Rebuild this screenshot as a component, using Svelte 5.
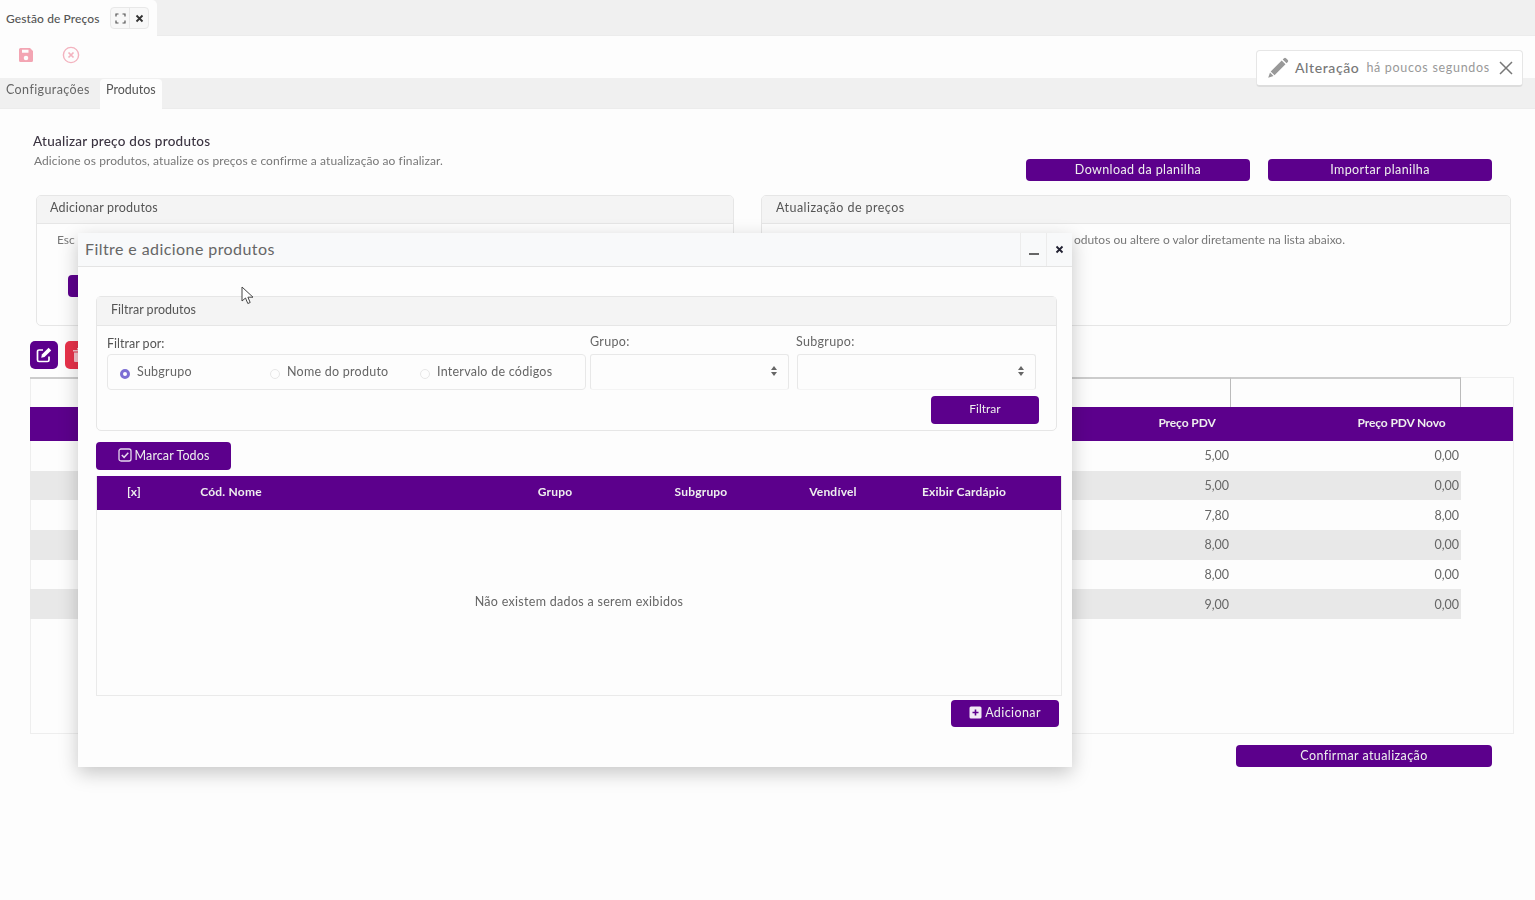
<script>
    const rows = [
        { pdv: '5,00', novo: '0,00' },
        { pdv: '5,00', novo: '0,00' },
        { pdv: '7,80', novo: '8,00' },
        { pdv: '8,00', novo: '0,00' },
        { pdv: '8,00', novo: '0,00' },
        { pdv: '9,00', novo: '0,00' }
    ];
    const radios = [
        { label: 'Subgrupo', checked: true },
        { label: 'Nome do produto', checked: false },
        { label: 'Intervalo de códigos', checked: false }
    ];
    const columns = ['Grupo', 'Subgrupo', 'Vendível', 'Exibir Cardápio'];
</script>

<div class="page">
    <div class="topbar">
        <div class="doc-tab">
            <span class="doc-title">Gestão de Preços</span>
            <div class="doc-actions">
                <span class="doc-btn">
                    <svg width="11" height="11" viewBox="0 0 11 11" fill="none" stroke="#555" stroke-width="1.2">
                        <path d="M1 3.5V1h2.5M7.5 1H10v2.5M10 7.5V10H7.5M3.5 10H1V7.5" />
                    </svg>
                </span>
                <span class="doc-btn">
                    <svg width="9" height="9" viewBox="0 0 9 9" stroke="#333" stroke-width="1.8">
                        <path d="M1.5 1.5l6 6M7.5 1.5l-6 6" />
                    </svg>
                </span>
            </div>
        </div>
    </div>

    <div class="toolbar">
        <svg width="16" height="16" viewBox="0 0 16 16">
            <path fill="#f3a5b3" fill-rule="evenodd" d="M2.5 1H12l3 3v9.5a1.5 1.5 0 0 1-1.5 1.5h-11A1.5 1.5 0 0 1 1 13.500v-11A1.500 1.500 0 0 1 2.500 1zM4 2.800v3h6.500v-3zM8 8.700a2.300 2.300 0 1 0 0 4.600 2.300 2.300 0 0 0 0-4.600z" />
        </svg>
        <svg width="18" height="18" viewBox="0 0 18 18" fill="none" stroke="#f3b3bf" stroke-width="1.400">
            <circle cx="9" cy="9" r="7.600" />
            <path d="M6.500 6.500l5 5M11.500 6.500l-5 5" stroke-width="1.700" />
        </svg>
    </div>

    <div class="tabs">
        <span class="tab">Configurações</span>
        <span class="tab active">Produtos</span>
    </div>

    <div class="content">
        <div class="intro">
            <div>
                <h2>Atualizar preço dos produtos</h2>
                <p>Adicione os produtos, atualize os preços e confirme a atualização ao finalizar.</p>
            </div>
            <div class="intro-actions">
                <button class="btn wide">Download da planilha</button>
                <button class="btn wide">Importar planilha</button>
            </div>
        </div>

        <div class="panels">
            <section class="panel left">
                <header>Adicionar produtos</header>
                <div class="panel-body">
                    <p>Esc</p>
                    <span class="stub"></span>
                </div>
            </section>
            <section class="panel right">
                <header>Atualização de preços</header>
                <div class="panel-body">
                    <p class="clipped-end">odutos ou altere o valor diretamente na lista abaixo.</p>
                </div>
            </section>
        </div>

        <div class="row-actions">
            <span class="square purple">
                <svg width="16" height="16" viewBox="0 0 16 16" fill="none" stroke="#fff" stroke-width="1.700">
                    <path d="M13 9.500V13a1.500 1.500 0 0 1-1.500 1.500H3A1.500 1.500 0 0 1 1.500 13V4.500A1.500 1.500 0 0 1 3 3h4" />
                    <path fill="#fff" stroke="none" d="M12.600.8l2.600 2.600-6.700 6.700-3.300.7.700-3.300z" />
                </svg>
            </span>
            <span class="square red">
                <svg width="12" height="14" viewBox="0 0 12 14" fill="#f6c3cb">
                    <path d="M0 2h12v1.500H0zM4 0h4v1.500H4zM1 4.500h10V13a1 1 0 0 1-1 1H2a1 1 0 0 1-1-1z" />
                </svg>
            </span>
        </div>

        <div class="grid-frame">
            <div class="filter-row">
                <span class="filter-fill"></span>
                <span class="filter-cell"></span>
                <span class="filter-gap"></span>
            </div>
            <div class="grid-head">
                <span></span>
                <span>Preço PDV</span>
                <span>Preço PDV Novo</span>
            </div>
            {#each rows as r, i}
                <div class="grid-row" class:odd={i % 2 === 1}>
                    <span></span>
                    <span>{r.pdv}</span>
                    <span>{r.novo}</span>
                </div>
            {/each}
        </div>

        <div class="confirm">
            <button class="btn confirm-btn">Confirmar atualização</button>
        </div>
    </div>

    <div class="toast">
        <svg width="22" height="22" viewBox="0 0 22 22" fill="#999">
            <path d="M17 1.200a1.500 1.500 0 0 1 2 0l1.800 1.800a1.500 1.500 0 0 1 0 2l-1.300 1.300-3.800-3.800zM14.700 3.500l3.800 3.800L7.500 18.300l-3.800-3.800zM3 15.500l3.500 3.500-5.300 1.800z" />
        </svg>
        <strong>Alteração</strong>
        <span>há poucos segundos</span>
        <svg class="toast-x" width="14" height="14" viewBox="0 0 14 14" stroke="#777" stroke-width="1.500">
            <path d="M1 1l12 12M13 1L1 13" />
        </svg>
    </div>

    <div class="modal">
        <div class="modal-title">
            <span class="modal-name">Filtre e adicione produtos</span>
            <span class="modal-btn"><i class="minus"></i></span>
            <span class="modal-btn">
                <svg class="modal-x" width="9" height="9" viewBox="0 0 9 9" stroke="#223" stroke-width="1.800">
                    <path d="M1.500 1.500l6 6M7.500 1.500l-6 6" />
                </svg>
            </span>
        </div>
        <div class="modal-body">
            <section class="filter-panel">
                <header>Filtrar produtos</header>
                <div class="filter-body">
                    <div class="filter-fields">
                        <div class="field by">
                            <span class="by-label">Filtrar por:</span>
                            <div class="radio-box">
                                {#each radios as r}
                                    <span class="radio">
                                        <i class:on={r.checked}></i>{r.label}
                                    </span>
                                {/each}
                            </div>
                        </div>
                        <div class="field grupo">
                            <span class="lbl">Grupo:</span>
                            <div class="select"><span class="arrows"></span></div>
                        </div>
                        <div class="field subgrupo">
                            <span class="lbl">Subgrupo:</span>
                            <div class="select"><span class="arrows"></span></div>
                        </div>
                    </div>
                    <div class="filter-actions">
                        <button class="btn filtrar">Filtrar</button>
                    </div>
                </div>
            </section>

            <button class="btn mark">
                <svg width="14" height="14" viewBox="0 0 14 14" fill="none" stroke="#e6d8ee" stroke-width="1.300">
                    <rect x="1" y="1" width="12" height="12" rx="2" />
                    <path d="M3.800 7l2.300 2.300 4.200-4.500" stroke-width="1.500" />
                </svg>
                Marcar Todos
            </button>

            <div class="result">
                <div class="result-head">
                    <span class="c-x">[x]</span>
                    <span class="c-nome">Cód. Nome</span>
                    {#each columns as c}
                        <span class="c-col">{c}</span>
                    {/each}
                </div>
                <div class="result-empty">Não existem dados a serem exibidos</div>
            </div>

            <div class="add-row">
                <button class="btn add">
                    <svg width="13" height="13" viewBox="0 0 13 13">
                        <path fill="#f1eaf5" fill-rule="evenodd" d="M2 .5h9A1.500 1.500 0 0 1 12.500 2v9a1.500 1.500 0 0 1-1.500 1.500H2A1.500 1.500 0 0 1 .5 11V2A1.500 1.500 0 0 1 2 .5zM5.700 3.500v2.200H3.500v1.600h2.200v2.200h1.600V7.300h2.200V5.700H7.300V3.500z" />
                    </svg>
                    Adicionar
                </button>
            </div>
        </div>
    </div>

    <svg class="cursor" width="14" height="20" viewBox="0 0 14 20">
        <path fill="#fff" stroke="#444" stroke-width="1" d="M1 1v14l3.500-3 2.300 5.500 2.400-1-2.300-5.300H12z" />
    </svg>
</div>

<style>
    :global(body) {
        margin: 0;
        background: #fdfdfd;
        font-family: "Lato", "Open Sans", sans-serif;
        color: #555;
    }
    .page { position: relative; width: 1535px; height: 900px; overflow: hidden; font-size: 12px; filter: blur(.35px); }

    .topbar { height: 36px; background: #f0f0f0; border-bottom: 1px solid #ececec; box-sizing: border-box; }
    .doc-tab {
        width: 157px; height: 36px; background: #fdfdfd; border-radius: 0 5px 0 0;
        display: flex; align-items: center; justify-content: space-between;
        padding: 0 8px 0 6px; box-sizing: border-box;
    }
    .doc-title { font-size: 12px; color: #555; font-weight: 500; letter-spacing: .1px; }
    .doc-actions { display: flex; border: 1px solid #e8e8e8; border-radius: 4px; background: #f8f8f8; }
    .doc-btn { width: 18px; height: 20px; display: flex; align-items: center; justify-content: center; }
    .doc-btn + .doc-btn { border-left: 1px solid #e8e8e8; }

    .toolbar { height: 42px; display: flex; align-items: center; gap: 28px; padding: 0 0 4px 18px; box-sizing: border-box; }

    .tabs { height: 31px; background: #f0f0f0; display: flex; align-items: flex-end; border-bottom: 1px solid #ececec; box-sizing: border-box; }
    .tab { height: 29px; padding: 3px 6px 0; box-sizing: border-box; font-size: 12.500px; color: #666; width: 100px; white-space: nowrap; letter-spacing: .4px; }
    .tab.active { width: 62px; background: #fdfdfd; border-radius: 4px 4px 0 0; color: #555; margin-bottom: -1px; height: 30px; letter-spacing: 0; }

    .content { padding: 0 22px 0 30px; }
    .intro { display: flex; justify-content: space-between; align-items: flex-end; height: 72px; box-sizing: border-box; }
    .intro h2 { margin: 0 0 4px 3px; font-size: 13.500px; font-weight: 500; color: #3a3340; letter-spacing: .25px; }
    .intro p { margin: 0 0 13px 4px; font-size: 12px; color: #777; letter-spacing: .08px; }
    .intro-actions { display: flex; gap: 18px; margin-right: 21px; }

    .btn {
        background: #5c008c; color: #eee; border: 0; border-radius: 4px; font: inherit;
        display: inline-flex; align-items: center; justify-content: center; gap: 3px; padding: 0 0 2px;
    }
    .btn.wide { width: 224px; height: 22px; font-size: 12.500px; letter-spacing: .4px; }

    .panels { display: flex; gap: 27px; margin: 14px 0 0 6px; }
    .panel { border: 1px solid #e6e6e6; border-radius: 5px; height: 131px; box-sizing: border-box; overflow: hidden; }
    .panel.left { width: 698px; }
    .panel.right { width: 750px; }
    .panel header { height: 28px; background: #f4f4f4; border-bottom: 1px solid #e6e6e6; box-sizing: border-box; padding: 4px 14px; font-size: 12.500px; color: #555; }
    .panel.left header { letter-spacing: .2px; padding-left: 13px; }
    .panel.right header { letter-spacing: .45px; }
    .panel-body { padding: 8px 20px; font-size: 12px; color: #777; }
    .panel-body p { margin: 0; }
    .clipped-end { text-align: right; padding-right: 145px; }
    .stub { display: block; width: 40px; height: 22px; background: #5c008c; border-radius: 4px; margin: 28px 0 0 11px; }

    .row-actions { display: flex; gap: 7px; margin-top: 15px; }
    .square { width: 28px; height: 28px; border-radius: 5px; display: flex; align-items: center; justify-content: center; }
    .square.purple { background: #5c008c; }
    .square.red { background: #e8324a; }

    .grid-frame { margin-top: 8px; width: 1483px; height: 356px; border: 1px solid #eeeeee; border-width: 0 1px 1px 0; box-shadow: inset 1px 0 0 #eee; }
    .filter-row { height: 30px; display: flex; }
    .filter-fill { flex: 1; border-top: 2px solid #cccccc; }
    .filter-cell { width: 229px; border: 1px solid #bbb; border-width: 0 1px; border-top: 2px solid #cccccc; }
    .filter-gap { width: 52px; border-top: 1px solid #eee; }
    .grid-head { height: 34px; background: #5c008c; color: #eee; display: grid; grid-template-columns: 1fr 206px 223px; align-items: center; text-align: center; font-size: 12px; font-weight: 700; padding-bottom: 3px; box-sizing: border-box; letter-spacing: -.1px; }
    .grid-row { height: 29.700px; width: 1431px; display: grid; grid-template-columns: 1fr 230px 230px; align-items: center; text-align: right; font-size: 12.500px; color: #666; }
    .grid-row span { padding-right: 2px; }
    .grid-row.odd { background: #e8e8e8; }
    .confirm { display: flex; justify-content: flex-end; margin: 11px 21px 0 0; }
    .confirm-btn { width: 256px; height: 22px; font-size: 12.500px; letter-spacing: .4px; }

    .toast {
        position: absolute; left: 1256px; top: 50px; width: 267px; height: 37px; box-sizing: border-box;
        background: #fff; border: 1px solid #e6e6e6; border-bottom: 2px solid #ddd; border-radius: 4px;
        display: flex; align-items: center; padding: 0 9px 1px 10px; color: #888;
    }
    .toast strong { font-size: 14px; font-weight: 500; color: #777; margin-left: 6px; letter-spacing: .6px; }
    .toast span { font-size: 12.500px; margin-left: 7px; color: #999; letter-spacing: .7px; white-space: nowrap; }
    .toast-x { margin-left: auto; }

    .modal {
        position: absolute; left: 78px; top: 233px; width: 994px; height: 534px;
        background: #fdfdfd; box-shadow: 0 6px 18px rgba(0, 0, 0, .22);
    }
    .modal-title { height: 34px; background: #f8f9fa; border-bottom: 1px solid #e4e4e4; box-sizing: border-box; display: flex; align-items: stretch; }
    .modal-name { flex: 1; padding: 6px 7px; font-size: 16px; color: #666; letter-spacing: .42px; }
    .modal-btn { width: 25px; border-left: 1px solid #ececec; display: flex; align-items: center; justify-content: center; }
    .minus { display: block; width: 10px; height: 1.500px; background: #666; margin-top: 9px; }
    .modal-x { margin: 0 1px 0 0; }
    .modal-body { padding: 29px 10px 0 18px; }

    .filter-panel { width: 961px; height: 135px; border: 1px solid #e6e6e6; border-radius: 5px; box-sizing: border-box; }
    .filter-panel header { height: 29px; background: #f4f4f4; border-bottom: 1px solid #e6e6e6; box-sizing: border-box; padding: 5px 14px; font-size: 12.500px; color: #555; }
    .filter-body { padding: 8px 17px 0 10px; }
    .filter-fields { display: flex; height: 56px; }
    .field { display: flex; flex-direction: column; }
    .field.by { width: 479px; }
    .field.grupo { width: 199px; margin-left: 4px; }
    .field.subgrupo { width: 239px; margin-left: 8px; }
    .by-label { font-size: 12.500px; margin: 2px 0 3px; color: #555; height: 15px; }
    .lbl { font-size: 12.500px; margin: 1px 0 5px; color: #666; height: 14px; letter-spacing: .3px; line-height: 14px; }
    .field.subgrupo .lbl { margin-left: -1px; }
    .radio-box { height: 36px; border: 1px solid #e8e8e8; border-radius: 4px; box-sizing: border-box; display: grid; grid-template-columns: 150px 150px 1fr; align-items: center; padding: 0 0 0 12px; }
    .radio { display: flex; align-items: center; gap: 7px; font-size: 12.500px; color: #666; letter-spacing: .25px; margin-top: -1px; }
    .radio i { width: 10px; height: 10px; border-radius: 50%; border: 1px solid #e6e6e6; box-sizing: border-box; margin-top: 5px; }
    .radio i.on { background: #fff; border: 3px solid #7d6fd4; }
    .select { height: 36px; border: 1px solid #e8e8e8; border-bottom-color: #f4f4f4; border-radius: 3px; box-sizing: border-box; position: relative; }
    .arrows { position: absolute; right: 14px; top: 11px; width: 0; height: 10px; }
    .arrows::before, .arrows::after { content: ""; position: absolute; left: -3px; border-left: 3px solid transparent; border-right: 3px solid transparent; }
    .arrows::before { top: 0; border-bottom: 4px solid #666; }
    .arrows::after { top: 6px; border-top: 4px solid #666; }
    .filter-actions { display: flex; justify-content: flex-end; margin: 6px 0 0; }
    .filtrar { width: 108px; height: 28px; font-size: 12px; padding-bottom: 3px; }

    .mark { width: 135px; height: 28px; margin-top: 11px; font-size: 12.500px; display: flex; letter-spacing: .1px; }
    .result { width: 966px; height: 220px; margin: 6px 0 0 0; border: 1px solid #eaeaea; border-top: 0; box-sizing: border-box; }
    .result-head { height: 34px; background: #5c008c; color: #eee; font-size: 12px; font-weight: 700; position: relative; letter-spacing: .2px; }
    .result-head span { position: absolute; top: 8px; white-space: nowrap; transform: translateX(-50%); }
    .c-x { left: 37px; }
    .c-nome { left: 134px; }
    .c-col:nth-child(3) { left: 458px; }
    .c-col:nth-child(4) { left: 604px; }
    .c-col:nth-child(5) { left: 736px; }
    .c-col:nth-child(6) { left: 867px; }
    .result-empty { height: 185px; padding-bottom: 3px; box-sizing: border-box; display: flex; align-items: center; justify-content: center; font-size: 12.500px; color: #666; letter-spacing: .3px; }

    .add-row { display: flex; justify-content: flex-end; margin: 4px 3px 0 0; }
    .add { width: 108px; height: 27px; font-size: 12.500px; letter-spacing: .4px; }

    .cursor { position: absolute; left: 241px; top: 286px; }
</style>
